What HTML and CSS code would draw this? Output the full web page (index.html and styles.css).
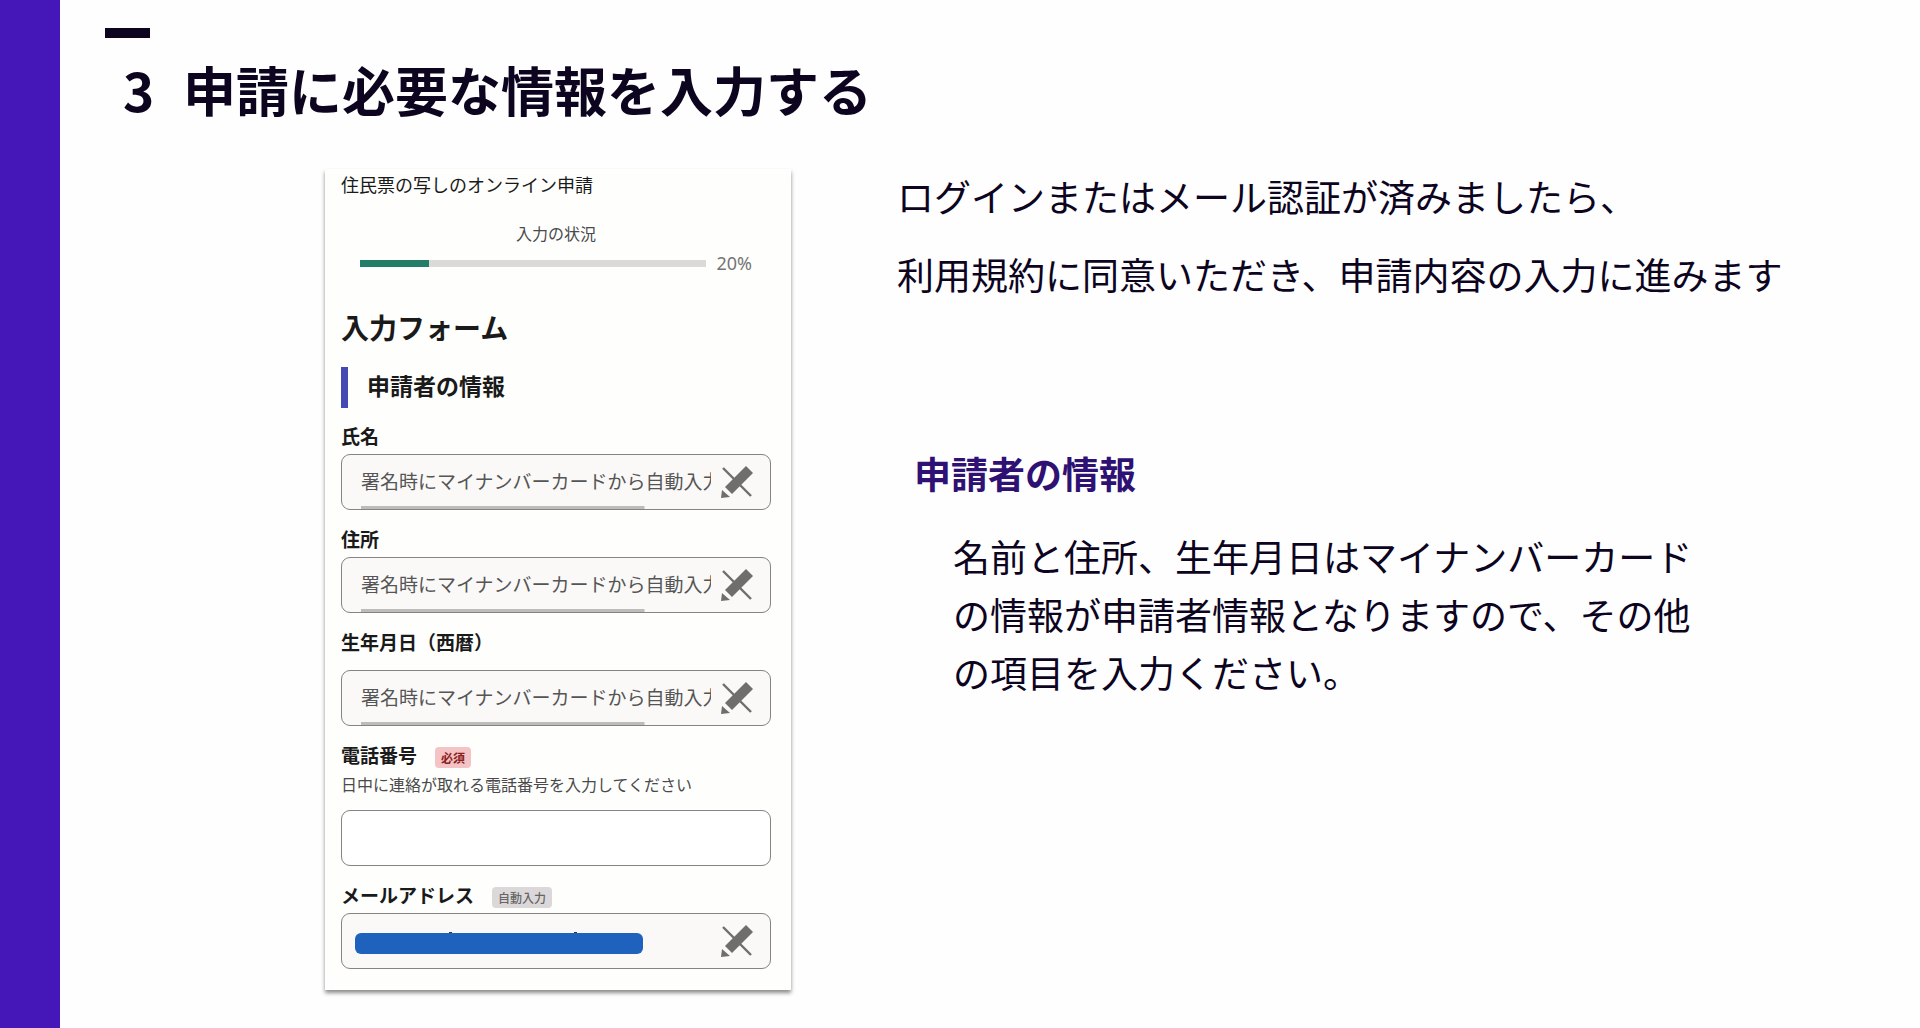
FILE: index.html
```html
<!DOCTYPE html>
<html lang="ja">
<head>
<meta charset="utf-8">
<meta name="viewport" content="width=device-width, initial-scale=1">
<title>申請に必要な情報を入力する</title>
<link rel="stylesheet" href="styles.css">
</head>
<body>
<svg class="symbols" aria-hidden="true">
  <symbol id="no-edit" viewBox="0 0 32 32">
    <path d="M2 2 30 30" fill="none" stroke="currentColor" stroke-width="2.4"/>
    <path d="M25 0 32 7 11 28 4 21Z" fill="currentColor"/>
    <path d="M1 24 9 31 0 32Z" fill="currentColor"/>
  </symbol>
</svg>
<div class="stripe"></div>
<main class="slide">
  <header class="slide-header">
    <div class="dash"></div>
    <h1><span class="step">3</span>申請に必要な情報を入力する</h1>
  </header>
  <div class="columns">
    <form class="card">
      <p class="service">住民票の写しのオンライン申請</p>
      <label class="progress-label" for="progress">入力の状況</label>
      <div class="progress-row">
        <progress id="progress" value="20" max="100"></progress>
        <span>20%</span>
      </div>
      <h2>入力フォーム</h2>
      <h3>申請者の情報</h3>
      <div class="field">
        <div class="label-row"><label for="name">氏名</label></div>
        <div class="control locked">
          <input class="scrolled" id="name" readonly value="署名時にマイナンバーカードから自動入力">
          <svg class="icon" aria-hidden="true"><use href="#no-edit"/></svg>
        </div>
      </div>
      <div class="field">
        <div class="label-row"><label for="address">住所</label></div>
        <div class="control locked">
          <input class="scrolled" id="address" readonly value="署名時にマイナンバーカードから自動入力">
          <svg class="icon" aria-hidden="true"><use href="#no-edit"/></svg>
        </div>
      </div>
      <div class="field spaced">
        <div class="label-row"><label for="birth">生年月日（西暦）</label></div>
        <div class="control locked">
          <input class="scrolled" id="birth" readonly value="署名時にマイナンバーカードから自動入力">
          <svg class="icon" aria-hidden="true"><use href="#no-edit"/></svg>
        </div>
      </div>
      <div class="field spaced">
        <div class="label-row"><label for="tel">電話番号</label><span class="badge required">必須</span></div>
        <p class="help" id="tel-help">日中に連絡が取れる電話番号を入力してください</p>
        <div class="control">
          <input id="tel" type="tel" aria-describedby="tel-help">
        </div>
      </div>
      <div class="field">
        <div class="label-row"><label for="mail">メールアドレス</label><span class="badge">自動入力</span></div>
        <div class="control locked">
          <input id="mail" type="email" readonly>
          <svg class="mask" viewBox="0 0 288 22" aria-hidden="true">
            <path d="M94 0h3v1h-3zM219 0h3v1h-3z" fill="#333"/>
            <rect y="1" width="288" height="21" rx="6" fill="#1f62bd"/>
          </svg>
          <svg class="icon" aria-hidden="true"><use href="#no-edit"/></svg>
        </div>
      </div>
    </form>
    <section class="notes">
      <p class="lead">ログインまたはメール認証が済みましたら、<br>利用規約に同意いただき、申請内容の入力に進みます</p>
      <h2 class="note-title">申請者の情報</h2>
      <p class="note">名前と住所、生年月日はマイナンバーカードの情報が申請者情報となりますので、その他の項目を入力ください。</p>
    </section>
  </div>
</main>
</body>
</html>
```
FILE: styles.css
```css
* {
  box-sizing: border-box;
}

body {
  margin: 0;
  min-height: 100vh;
  display: flex;
  background: #fefefe;
  color: #0d051f;
  font-family: "Noto Sans CJK JP", sans-serif;
}

h1, h2, h3, p {
  margin: 0;
}

.symbols {
  position: absolute;
  width: 0;
  height: 0;
}

.stripe {
  flex: 0 0 60px;
  background: #4516b8;
}

.slide {
  flex: 1;
  min-width: 0;
}

.slide-header {
  padding: 28px 45px 0;
}

.dash {
  width: 45px;
  height: 10px;
  background: #0d051f;
}

h1 {
  display: flex;
  margin-top: 11px;
  padding-left: 18px;
  font-size: 53px;
  line-height: 80px;
  font-weight: 700;
}

.step {
  width: 60px;
}

.columns {
  display: grid;
  grid-template-columns: 265fr 466px 106fr 1023fr;
  align-items: start;
  padding: 40px 0 36px;
}

/* Form card */

.card {
  grid-column: 2;
  padding: 0 20px 21px 16px;
  background: #fefefd;
  color: #1a1a1a;
  box-shadow: 0 3px 4px rgba(0, 0, 0, 0.45);
}

.service {
  font-size: 18px;
  line-height: 30px;
}

.progress-label {
  display: block;
  margin-top: 22px;
  font-size: 16px;
  line-height: 24px;
  text-align: center;
  color: #4a4a4a;
}

.progress-row {
  display: flex;
  align-items: center;
  gap: 10px;
  margin-top: 6px;
  padding: 0 19px;
  font: 18px/24px "Noto Sans", sans-serif;
  color: #757575;
}

progress {
  flex: 1;
  min-width: 0;
  height: 7px;
  border: 0;
  appearance: none;
  background: #dcd9d9;
}

progress::-webkit-progress-bar {
  background: #dcd9d9;
}

progress::-webkit-progress-value {
  background: #237d68;
}

.card h2 {
  margin-top: 32px;
  font-size: 28px;
  line-height: 40px;
}

.card h3 {
  margin: 20px 0 14px;
  padding: 0 0 5px 19px;
  border-left: 7px solid #4549b4;
  font-size: 23px;
  line-height: 36px;
}

.field + .field {
  margin-top: 15px;
}

.label-row {
  display: flex;
  align-items: center;
  gap: 18px;
  font-size: 19px;
  line-height: 28px;
  font-weight: 700;
}

.badge {
  margin-top: 5px;
  padding: 0 6px;
  border-radius: 4px;
  background: #dcd8d9;
  color: #666;
  font-size: 12px;
  line-height: 21px;
  font-weight: 500;
}

.badge.required {
  background: #f3c3c6;
  color: #8b2020;
  font-weight: 700;
}

.help {
  margin-top: 3px;
  font-size: 16px;
  line-height: 24px;
  color: #4a4a4a;
}

.control {
  position: relative;
  display: flex;
  align-items: center;
  gap: 10px;
  height: 56px;
  margin-top: 4px;
  padding: 0 17px 0 19px;
  border: 1px solid #868382;
  border-radius: 9px;
  background: #fff;
}

.spaced .control {
  margin-top: 14px;
}

.control.locked {
  background: #faf9f8;
}

.control input {
  flex: 1;
  min-width: 0;
  height: 54px;
  padding: 0 0 3px;
  border: 0;
  outline: 0;
  background: transparent;
  color: #555;
  font: inherit;
  font-size: 19px;
}

/* Horizontal scroll thumb under a value that overflows */
.control .scrolled {
  background: linear-gradient(#bdbcbb, #bdbcbb) left bottom / 81% 3px no-repeat;
}

.icon {
  flex: none;
  width: 32px;
  height: 32px;
  color: #706e6d;
}

.mask {
  position: absolute;
  left: 13px;
  top: 18px;
  width: 288px;
  height: 22px;
}

/* Explanation */

.notes {
  grid-column: 4;
  font-size: 37px;
}

.lead {
  margin-top: -12px;
  line-height: 78px;
}

.note-title {
  margin-top: 131px;
  padding-left: 17px;
  font-size: 37px;
  line-height: 58px;
  color: #2e1173;
}

.note {
  max-width: 20em;
  margin: 25px 0 0 56px;
  line-height: 58px;
}
```
